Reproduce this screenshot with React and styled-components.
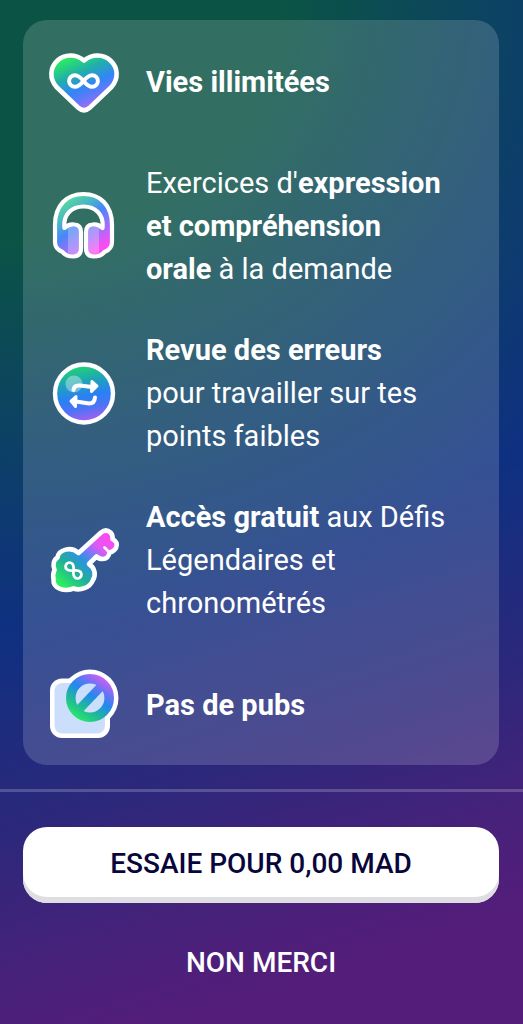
import React from "react";
import styled, { createGlobalStyle } from "styled-components";

const GlobalStyle = createGlobalStyle`
  * { box-sizing: border-box; }
  body {
    margin: 0;
    font-family: Roboto, "Open Sans", sans-serif;
    color: #ffffff;
    background: #551d7a;
  }
`;

const Page = styled.main`
  display: flex;
  flex-direction: column;
  min-height: 100vh;
  background:
    radial-gradient(ellipse 141% 61% at 0 0, #0b5445 0%, #0b5445 38%, rgba(12, 66, 100, 0.95) 70%, rgba(14, 48, 130, 0) 100%),
    linear-gradient(162deg, #0f3080 0%, #0f3080 53%, #2c287b 70%, #45227a 81%, #551d7a 91%);
`;

const Card = styled.ul`
  display: flex;
  flex-direction: column;
  gap: 38px;
  margin: 20px 24px 24px 23px;
  padding: 20px 20px 18px 21px;
  list-style: none;
  border-radius: 24px;
  background: rgba(255, 255, 255, 0.16);
`;

const Feature = styled.li`
  display: flex;
  align-items: center;
  gap: 22px;
  min-height: 84px;
`;

const Icon = styled.svg`
  flex: none;
  width: 80px;
  height: 80px;
`;

const FeatureText = styled.p`
  flex: 1;
  margin: 0;
  font-size: 29px;
  line-height: 43px;
  font-weight: 400;
`;

const Strong = styled.strong`
  font-weight: 700;
`;

const Footer = styled.footer`
  display: flex;
  flex-direction: column;
  gap: 23px;
  padding: 35px 24px 23px 23px;
  border-top: 3px solid rgba(255, 255, 255, 0.2);
`;

const Button = styled.button`
  min-height: 76px;
  padding: 0 16px 2px;
  border: 0;
  border-radius: 24px;
  font-family: inherit;
  font-size: 28px;
  line-height: 32px;
  font-weight: 500;
  text-transform: uppercase;
  cursor: pointer;
  color: ${(p) => (p.$primary ? "#08063a" : "#ffffff")};
  background: ${(p) => (p.$primary ? "#ffffff" : "transparent")};
  box-shadow: ${(p) => (p.$primary ? "inset 0 -6px 0 #dedde2" : "none")};
`;

const INFINITY =
  "M0 0C-4 -5 -6.500 -6.500 -9.500 -6.500A6.500 6.500 0 0 0 -9.500 6.500C-6.500 6.500 -4 5 0 0C4 -5 6.500 -6.500 9.500 -6.500A6.500 6.500 0 0 1 9.500 6.500C6.500 6.500 4 5 0 0Z";

function HeartIcon() {
  return (
    <Icon viewBox="0 0 80 80" aria-hidden="true">
      <defs>
        <linearGradient id="heart" x1="0.15" y1="0" x2="0.7" y2="1">
          <stop offset="0.08" stopColor="#2bea62" />
          <stop offset="0.35" stopColor="#20b0a8" />
          <stop offset="0.6" stopColor="#3484f8" />
          <stop offset="0.78" stopColor="#6a78f8" />
          <stop offset="1" stopColor="#d45cf8" />
        </linearGradient>
      </defs>
      <path
        d="M40 18.500C32 11.500 20 12 13.500 18.500C5.500 26 5.500 37 12.500 45L34 65.500Q40 71 46 65.500L67.500 45C74.500 37 74.500 26 66.500 18.500C60 12 48 11.500 40 18.500Z"
        fill="url(#heart)"
        stroke="#fff"
        strokeWidth="4.600"
        strokeLinejoin="round"
      />
      <path d={INFINITY} transform="translate(39.500 39) scale(0.9)" fill="none" stroke="#fff" strokeWidth="4.400" />
    </Icon>
  );
}

function HeadphonesIcon() {
  return (
    <Icon viewBox="0 0 80 80" aria-hidden="true">
      <defs>
        <linearGradient id="phones" x1="0.2" y1="0" x2="0.85" y2="1">
          <stop offset="0.08" stopColor="#58d6a0" />
          <stop offset="0.28" stopColor="#48b4c8" />
          <stop offset="0.45" stopColor="#4a86f8" />
          <stop offset="0.68" stopColor="#a070f8" />
          <stop offset="0.88" stopColor="#fb4cf4" />
        </linearGradient>
      </defs>
      <path
        d="M11 38C11 18 23 7 39.500 7C56 7 68 18 68 38V55Q68 62 60.500 65Q57 69.500 50 69.500Q42 69.500 42 61V45Q42 38 48.500 37.500Q54 36.500 58.500 41C60 27 51 19.500 39.500 19.500C28 19.500 19 27 20.500 41Q25 36.500 30.500 37.500Q37 38 37 45V61Q37 69.500 29 69.500Q22 69.500 18.500 65Q11 62 11 55Z"
        fill="url(#phones)"
        stroke="#fff"
        strokeWidth="4.200"
        strokeLinejoin="round"
      />
      <path d="M24 40H31Q35 40 35 45V61Q35 67 29 67.500L24 66Z" fill="#fff" opacity="0.26" />
      <path d="M55 40H48Q44 40 44 45V61Q44 67 50 67.500L55 66Z" fill="#fff" opacity="0.26" />
    </Icon>
  );
}

function ReviewIcon() {
  return (
    <Icon viewBox="0 0 80 80" aria-hidden="true">
      <defs>
        <linearGradient id="review" x1="0.4" y1="0" x2="0.6" y2="1">
          <stop offset="0.05" stopColor="#20d078" />
          <stop offset="0.3" stopColor="#1ea4b8" />
          <stop offset="0.55" stopColor="#2a80f4" />
          <stop offset="0.75" stopColor="#4c74f4" />
          <stop offset="1" stopColor="#b45cf4" />
        </linearGradient>
      </defs>
      <circle cx="40" cy="39.500" r="29" fill="url(#review)" stroke="#fff" strokeWidth="4.400" />
      <circle cx="30" cy="30" r="8.500" fill="#fff" opacity="0.36" />
      <g stroke="#fff" strokeLinecap="round" strokeLinejoin="round">
        <path d="M29.500 36Q30 31 36 31.500L48 33" fill="none" strokeWidth="4" />
        <path d="M48 27.500L53 32L47.500 37.500Z" fill="#fff" strokeWidth="3" />
        <path d="M51 43.500Q50.500 49.500 45 49.500L32 47.500" fill="none" strokeWidth="4" />
        <path d="M32 42.500L27 47L31.500 52.500Z" fill="#fff" strokeWidth="3" />
      </g>
    </Icon>
  );
}

function KeyIcon() {
  return (
    <Icon viewBox="0 0 80 80" aria-hidden="true">
      <defs>
        <linearGradient id="key" x1="0.1" y1="0.95" x2="0.9" y2="0.1">
          <stop offset="0.05" stopColor="#2cec60" />
          <stop offset="0.32" stopColor="#20ac9c" />
          <stop offset="0.5" stopColor="#2c94e0" />
          <stop offset="0.64" stopColor="#7878f8" />
          <stop offset="0.78" stopColor="#e058f4" />
          <stop offset="1" stopColor="#ff48f0" />
        </linearGradient>
      </defs>
      <path
        d="M10.500 49C8.500 44 9.500 39 13.500 36.500C14.500 28.500 27 25 34.500 32L57 11.500Q62 7.500 66.500 11.500Q69 14 68.500 18Q74.500 21 72 27Q69.500 31 65.500 31.500Q64.500 38 58.500 38Q55 38 52.500 35.500L45 43C51 47 52.500 54 48.500 60C46 66.500 36 70 29.500 67.500C21 71 8.500 68 9.500 58Q8.500 53 10.500 49Z"
        fill="url(#key)"
        stroke="#fff"
        strokeWidth="4.600"
        strokeLinejoin="round"
      />
      <path d="M60.500 26.500L65.500 31.500" stroke="#fff" strokeWidth="2.800" strokeLinecap="round" fill="none" />
      <path d={INFINITY} transform="translate(29.500 49.500) rotate(45) scale(0.600)" fill="none" stroke="#fff" strokeWidth="4.600" />
    </Icon>
  );
}

function NoAdsIcon() {
  return (
    <Icon viewBox="0 0 80 80" aria-hidden="true">
      <defs>
        <linearGradient id="noads" gradientUnits="userSpaceOnUse" x1="32" y1="53" x2="60" y2="12">
          <stop offset="0" stopColor="#28e868" />
          <stop offset="0.25" stopColor="#20bc94" />
          <stop offset="0.55" stopColor="#2488ee" />
          <stop offset="0.75" stopColor="#6874f4" />
          <stop offset="1" stopColor="#d85cf6" />
        </linearGradient>
      </defs>
      <rect x="6" y="13.500" width="60" height="59.500" rx="12" fill="#fff" />
      <circle cx="46" cy="33" r="28.500" fill="#fff" />
      <rect x="10.500" y="18" width="50.500" height="50.500" rx="8" fill="#cbdffc" />
      <circle cx="46" cy="33" r="18" fill="#cbdffc" />
      <circle cx="46" cy="33" r="19.200" fill="none" stroke="url(#noads)" strokeWidth="9.600" />
      <path d="M35.500 44L56.500 22" stroke="url(#noads)" strokeWidth="9" />
    </Icon>
  );
}

export default function App() {
  return (
    <>
      <GlobalStyle />
      <Page>
        <Card>
          <Feature>
            <HeartIcon />
            <FeatureText>
              <Strong>Vies illimitées</Strong>
            </FeatureText>
          </Feature>
          <Feature>
            <HeadphonesIcon />
            <FeatureText>
              Exercices d'<Strong>expression<br />et compréhension<br />orale</Strong> à la demande
            </FeatureText>
          </Feature>
          <Feature>
            <ReviewIcon />
            <FeatureText>
              <Strong>Revue des erreurs</Strong><br />pour travailler sur tes<br />points faibles
            </FeatureText>
          </Feature>
          <Feature>
            <KeyIcon />
            <FeatureText>
              <Strong>Accès gratuit</Strong> aux Défis<br />Légendaires et<br />chronométrés
            </FeatureText>
          </Feature>
          <Feature>
            <NoAdsIcon />
            <FeatureText>
              <Strong>Pas de pubs</Strong>
            </FeatureText>
          </Feature>
        </Card>
        <Footer>
          <Button type="button" $primary>
            Essaie pour 0,00 MAD
          </Button>
          <Button type="button">Non merci</Button>
        </Footer>
      </Page>
    </>
  );
}
